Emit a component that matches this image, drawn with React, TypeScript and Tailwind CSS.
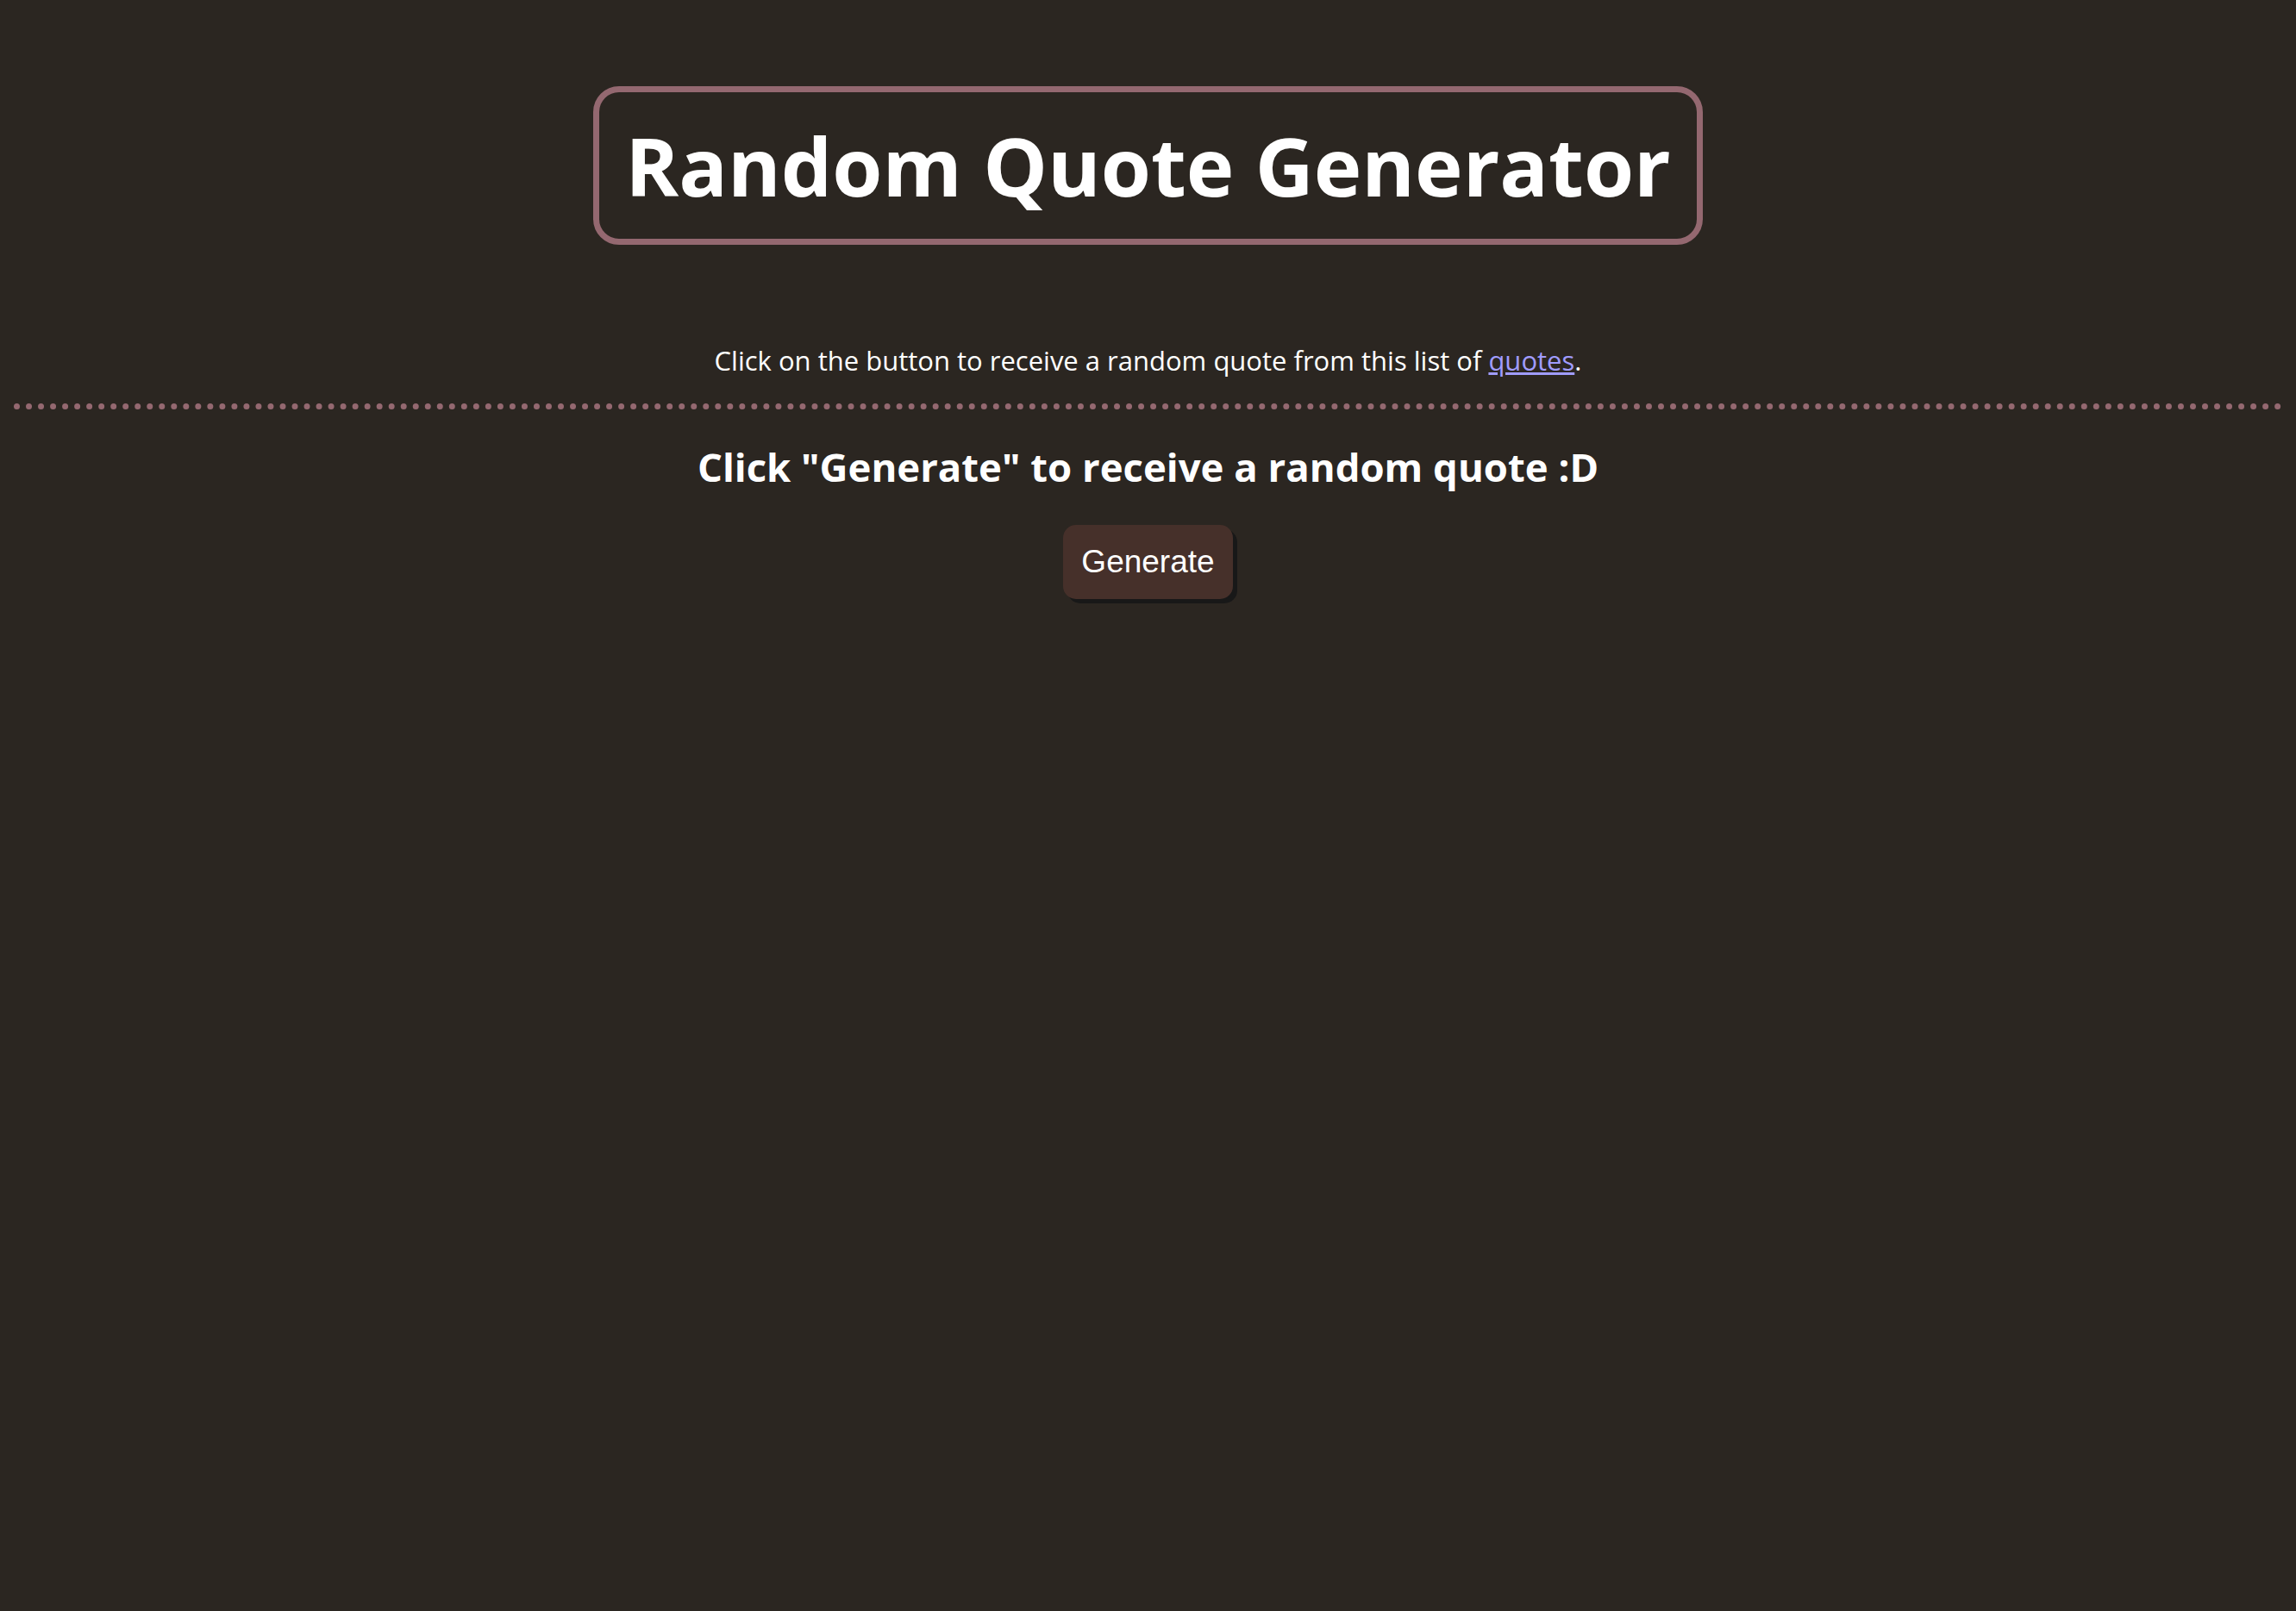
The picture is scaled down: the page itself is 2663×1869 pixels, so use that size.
export default function App() {
  return (
    <div className="min-h-screen w-full bg-[#2b2621] text-white font-['Open_Sans',sans-serif]">
      <div className="flex flex-col items-center pt-[100px]">
        <div className="flex h-[184px] items-center rounded-[30px] border-[7px] border-[#946870] px-[30px]">
          <h1 className="text-[94px] font-bold leading-none">Random Quote Generator</h1>
        </div>
        <p className="mt-[119px] text-[31px] leading-none">
          Click on the button to receive a random quote from this list of{' '}
          <a href="#" className="text-[#a09cff] underline">quotes</a>.
        </p>
      </div>
      <div className="mx-[16px] mt-[34px] border-t-[7px] border-dotted border-[#946870]" />
      <div className="flex flex-col items-center">
        <h2 className="mt-[44px] text-[45.5px] font-bold leading-none">Click "Generate" to receive a random quote :D</h2>
        <button className="mt-[44px] rounded-[15px] bg-[#46302a] px-[21px] py-[22px] font-['Liberation_Sans',Arial,sans-serif] text-[37px] leading-[42px] text-white shadow-[5px_5px_0_#181818]">
          Generate
        </button>
      </div>
    </div>
  );
}
